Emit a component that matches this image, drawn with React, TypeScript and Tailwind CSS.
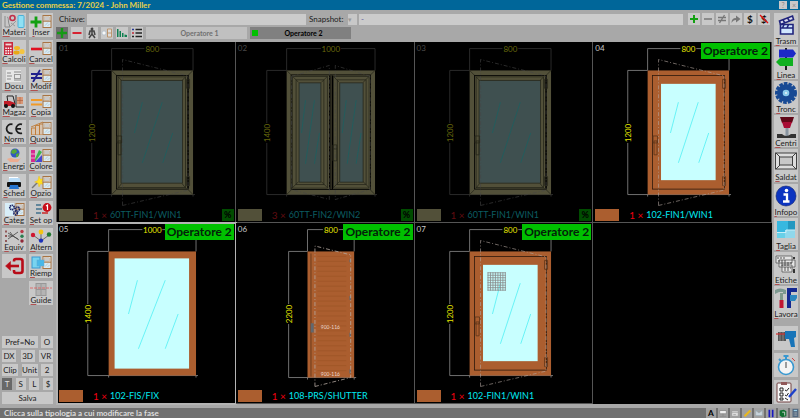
import React, { useState } from "react";

type Tool = { label: string; icon: React.ReactNode };

// Small window symbol shared by many toolbar icons
const Win = () => (
  <g>
    <rect x="14" y="2.5" width="8" height="12" fill="#dceaf0" stroke="#a87444" />
    <rect x="15.3" y="3.8" width="5.4" height="3.6" fill="#c9c9c9" stroke="#c8a27c" strokeWidth="0.4" />
    <path d="M14 8.200h8" stroke="#a87444" />
    <path d="M16 12.600l3-3.200M18.500 13l2-2" stroke="#8fb8cc" strokeWidth="0.6" />
  </g>
);

const leftTools: Tool[] = [
  {
    label: "Materi",
    icon: (
      <g fill="none">
        <path d="M3 3v11M5 4c2 0 1 5 2 7l1 3H3" stroke="#8a8a8a" />
        <circle cx="10.5" cy="5" r="2.5" stroke="#c0304a" strokeWidth="1.6" />
        <path d="M14 8l-6 6M9 10l4 3" stroke="#999" />
        <rect x="16" y="2.5" width="6" height="12" rx="1" fill="#8fe0f4" stroke="#4ab0d8" />
      </g>
    ),
  },
  { label: "Inser", icon: <><path d="M7 3.500v11M1.500 9h11" stroke="#12a012" strokeWidth="2.8" /><Win /></> },
  {
    label: "Calcoli",
    icon: (
      <g>
        <rect x="2" y="2" width="9" height="13" fill="#c8283c" />
        <path d="M3.500 4.500h6" stroke="#f2d8d8" strokeWidth="1.8" />
        <path d="M3.300 8.200h6.400M3.300 10.700h6.400M3.300 13.200h6.400" stroke="#fff" strokeWidth="1.4" strokeDasharray="1.5 0.9" />
        <ellipse cx="15" cy="8" rx="3" ry="2" fill="#f0b828" />
        <ellipse cx="14.5" cy="12.5" rx="3.2" ry="2" fill="#e8a818" />
        <ellipse cx="20" cy="11.5" rx="2.6" ry="2.6" fill="#f4c440" />
      </g>
    ),
  },
  { label: "Cancel", icon: <><path d="M2 9h11" stroke="#e01020" strokeWidth="2.6" /><Win /></> },
  {
    label: "Docu",
    icon: (
      <g>
        <path d="M4 3h15v12H4z" fill="#e6e6e6" />
        <path d="M5 6h4M5 9h5M5 12h4M12 5h7M12 13h7" stroke="#888" />
        <rect x="12.5" y="7.5" width="6" height="4" fill="none" stroke="#999" />
      </g>
    ),
  },
  { label: "Modif", icon: <><path d="M2 7h11M2 11h11M11 3L4 15" stroke="#20208c" strokeWidth="1.8" /><Win /></> },
  {
    label: "Magaz",
    icon: (
      <g>
        <path d="M5 3l1 7M5 3h6l2 8" fill="none" stroke="#222" />
        <path d="M2 8h6l5 2v3H2z" fill="#c01c28" />
        <path d="M14 2v12h8" fill="none" stroke="#333" />
        <rect x="15" y="4" width="6" height="7" fill="#d89878" />
        <path d="M15 7.500h6M18 4v7" stroke="#a85838" strokeWidth="0.6" />
        <circle cx="4" cy="13" r="2" fill="#111" />
        <circle cx="11" cy="13" r="2" fill="#111" />
      </g>
    ),
  },
  { label: "Copia", icon: <><path d="M2 7h11M2 11.500h11" stroke="#f09a28" strokeWidth="2" /><Win /></> },
  {
    label: "Norm",
    icon: <path d="M10.500 4.400A4.600 4.600 0 1 0 10.500 13.200M20 4.400A4.600 4.600 0 1 0 20 13.200M15 8.800h4" fill="none" stroke="#1c1c1c" strokeWidth="1.8" />,
  },
  {
    label: "Quota",
    icon: (
      <g fill="#d8c4b0" stroke="#c07c38" strokeWidth="0.9">
        <path d="M2.500 8h4v7h-4zM6.500 5.500h4V15h-4zM10.500 4h4v11h-4z" />
        <path d="M2 7l12-5" />
        <Win />
      </g>
    ),
  },
  {
    label: "Energi",
    icon: (
      <g>
        <circle cx="13" cy="6" r="4.5" fill="#3458c0" />
        <path d="M10 3l4-1 1 3-3 2-3-1zM14 7l3-1-1 4-2 0z" fill="#58a838" />
        <path d="M5 12q4-2 7 0h5l2-1-3 4H8z" fill="#ecac90" />
      </g>
    ),
  },
  {
    label: "Colore",
    icon: (
      <g>
        <path d="M2 3h4v12H2z" fill="#d82890" />
        <path d="M6 12l4-9 3 2-7 10z" fill="#3cb44c" />
        <path d="M6 15l7-7v7z" fill="#4848d0" />
        <path d="M2 7h4M2 11h4" stroke="#e8e8e8" strokeWidth="0.7" />
        <Win />
      </g>
    ),
  },
  {
    label: "Sched",
    icon: (
      <g>
        <path d="M7 3h9l2 5H7z" fill="#fff" />
        <path d="M7.500 4l-1 4h12l-1-4z" fill="#b8dcf8" />
        <rect x="5" y="8" width="14" height="5" rx="1" fill="#111" />
        <path d="M8 11h8l1 4H7z" fill="#2474d0" />
      </g>
    ),
  },
  {
    label: "Opzio",
    icon: (
      <g>
        <path d="M3 14l6-6" stroke="#777" strokeWidth="1.4" />
        <path d="M10 2l1.300 3.300 3.600-.6-2 2.800 2.200 3-3.600-.7L10 13l-.8-3.700L5.600 8l3.200-1.400z" fill="#ffe020" stroke="#e8b810" strokeWidth="0.4" />
        <Win />
      </g>
    ),
  },
  {
    label: "Categ",
    icon: (
      <g>
        <rect x="3" y="2" width="9" height="13" fill="#d8eef8" />
        <Win />
        <g fill="none" stroke="#1c2464" strokeWidth="1.7" strokeDasharray="1.3 0.5">
          <circle cx="10" cy="6.5" r="2.2" />
          <circle cx="15.5" cy="8" r="2" />
          <circle cx="13.5" cy="12" r="1.8" />
        </g>
      </g>
    ),
  },
  {
    label: "Set op",
    icon: (
      <g>
        <path d="M7 4h5M7 8h6M7 12h5" stroke="#40708c" strokeWidth="1.5" />
        <path d="M13 12h6" stroke="#c82828" strokeWidth="1.5" />
        <circle cx="18" cy="6.5" r="4.4" fill="#c80c18" />
        <path d="M17 5l1.500-1v5" fill="none" stroke="#fff" strokeWidth="1.2" />
      </g>
    ),
  },
  {
    label: "Equiv",
    icon: (
      <g>
        <path d="M6 5l10 6M6 11l10-7M6 8h5M11 8l6 4M8 4l3 4" stroke="#444" strokeWidth="0.8" fill="none" />
        <path d="M4 2.500v2M4 7v2M4 12v2" stroke="#905858" strokeWidth="2" />
        <circle cx="20" cy="3.5" r="1.7" fill="#b83848" />
        <circle cx="20" cy="8.3" r="1.7" fill="#2c7c50" />
        <circle cx="20" cy="13" r="1.7" fill="#902838" />
      </g>
    ),
  },
  {
    label: "Altern",
    icon: (
      <g>
        <path d="M4 7l8 6 8-6M12 4v9" fill="none" stroke="#444" strokeWidth="0.7" />
        <circle cx="4" cy="7" r="2.2" fill="#d01830" />
        <circle cx="12" cy="4" r="2.4" fill="#f4c414" />
        <circle cx="20" cy="6.5" r="2.2" fill="#207830" />
        <circle cx="12" cy="12.6" r="2.2" fill="#1c30b8" />
      </g>
    ),
  },
  {
    label: "",
    icon: (
      <g fill="none" stroke="#b80c18">
        <path d="M12 7.500V7q0-2 2-2h4q2.500 0 2.500 2v10q0 2-2.500 2h-4q-2 0-2-2v-1" strokeWidth="2.6" />
        <path d="M17 12H7" strokeWidth="2.6" />
        <path d="M8.500 7.500L3.500 12l5 4.500z" fill="#b80c18" strokeWidth="0.5" />
      </g>
    ),
  },
  {
    label: "Riemp",
    icon: (
      <g>
        <Win />
        <rect x="3" y="3" width="8" height="11" fill="#78d4f0" stroke="#3898d0" />
        <rect x="8" y="6" width="7" height="6" fill="#48b8e8" stroke="#60a8d0" strokeWidth="0.5" />
      </g>
    ),
  },
  {
    label: "Guide",
    icon: (
      <g fill="#b4b4b4" stroke="#989898">
        <rect x="7" y="2.5" width="10" height="12" />
        <path d="M12 2.500v12M7 8.500h10" />
        <path d="M1 7h22" stroke="#e05858" strokeWidth="0.8" strokeDasharray="3 1" />
      </g>
    ),
  },
];

const rightTools: Tool[] = [
  {
    label: "Trasm",
    icon: (
      <g stroke="#20247c" strokeWidth="1.6" fill="none">
        <path d="M5.500 8l13-5 1 3.500-13 5z" fill="#dde" />
        <path d="M9 7l2 3M13.500 5l2 3" />
        <path d="M6.500 11.500H19V21H6.500z" fill="#cfe6ff" />
        <path d="M6.500 15H19M10 11.500L8.500 15M14.500 11.500L13 15" />
      </g>
    ),
  },
  {
    label: "Linea",
    icon: (
      <g>
        <path d="M12 1v22" stroke="#222" strokeWidth="2" />
        <path d="M5 2.500h14l3 4-3 4H5z" fill="#1c28c8" />
        <path d="M19 11H6l-4 4 4 4h13z" fill="#10b020" />
      </g>
    ),
  },
  {
    label: "Tronc",
    icon: (
      <g>
        <circle cx="12" cy="12" r="9.5" fill="none" stroke="#184a94" strokeWidth="3" strokeDasharray="3.6 1.1" />
        <circle cx="12" cy="12" r="9" fill="#184a94" />
        <circle cx="12" cy="12" r="3.3" fill="#8cccec" />
        <circle cx="12" cy="12" r="1" fill="#e8f4fa" />
      </g>
    ),
  },
  {
    label: "Centri",
    icon: (
      <g>
        <path d="M6 2h14l-2 6H8z" fill="#600818" />
        <path d="M8 7h10l-2 6h-6z" fill="#a80c34" />
        <path d="M11.500 13h3v8l-1.500 1-1.500-1z" fill="#8894a0" />
        <path d="M3 19h5q4 4 9 0h5v4H3z" fill="#333" />
      </g>
    ),
  },
  {
    label: "Saldat",
    icon: (
      <g fill="#ddd" stroke="#404040">
        <rect x="1.5" y="4" width="21" height="16" />
        <rect x="5.500" y="8" width="13" height="8" fill="#c8c8c8" />
        <path d="M2 4l4 4M22 4l-4 4M2 20l4-4M22 20l-4-4" />
      </g>
    ),
  },
  {
    label: "Infopo",
    icon: (
      <g>
        <circle cx="12" cy="12" r="10" fill="#0c34c0" stroke="#0c2070" strokeWidth="0.6" />
        <circle cx="12.5" cy="6.5" r="1.8" fill="#fff" />
        <path d="M9.500 10.500h3.500V17M9 17.500h6.500" fill="none" stroke="#fff" strokeWidth="2.3" />
      </g>
    ),
  },
  {
    label: "Taglia",
    icon: (
      <g>
        <rect x="3" y="3" width="11" height="11" fill="#38b8e0" />
        <rect x="14" y="3" width="7" height="9" fill="#2498c0" />
        <rect x="3" y="14" width="8" height="6" fill="#68d0e8" />
        <rect x="11" y="12" width="10" height="8" fill="#90d8ec" />
        <path d="M3 14.500h9V12h9" stroke="#c8eef8" fill="none" />
      </g>
    ),
  },
  {
    label: "Etiche",
    icon: (
      <g fill="#e4e4e4" stroke="#555" strokeWidth="0.8">
        <path d="M2 4h16v7H2zM5 8h16v7H5zM8 13h10v7H8z" />
        <path d="M3 6h9M4 9h8M7 11h12M7 13h9M10 16h7M10 18h5" stroke="#333" strokeDasharray="2 1" />
        <path d="M20 5v2M20 17v4" stroke="#333" strokeWidth="2" />
      </g>
    ),
  },
  {
    label: "Lavora",
    icon: (
      <g>
        <path d="M1 4q5-3 11 0v4H9V6H5L1 8z" fill="#7c9890" />
        <path d="M6 7h3v8H6z" fill="#80988c" />
        <path d="M5.500 14h4v8h-4z" fill="#c01430" />
        <path d="M13 2h10v4h-6v16h-4z" fill="#142890" />
        <path d="M16 9h7v3l-2 3h-5z" fill="#2c88c0" />
      </g>
    ),
  },
];

const bottomTools: Tool[] = [
  {
    label: "Trapano",
    icon: (
      <g>
        <path d="M4 6h8v9H4z" fill="#555" />
        <path d="M6 6v9M9 6v9" stroke="#888" />
        <path d="M2 8h9" stroke="#d03030" strokeWidth="1.2" />
        <path d="M11 5h11v6l-2 1 1 9h-4l-2-8h-4z" fill="#1874b8" />
      </g>
    ),
  },
  {
    label: "Cronometro",
    icon: (
      <g>
        <path d="M9.500 3h5M12 3v3M5 6l2 2" stroke="#3898d0" strokeWidth="2" />
        <circle cx="12" cy="14" r="7.5" fill="#f4f4f4" stroke="#3898d0" strokeWidth="1.6" />
        <path d="M12 9v6" stroke="#444" />
        <path d="M18 5l3 3" stroke="#d04040" />
      </g>
    ),
  },
  {
    label: "Controlli",
    icon: (
      <g>
        <rect x="3" y="3" width="14" height="19" rx="1" fill="#f8f8f8" stroke="#704040" />
        <path d="M7 2h6v3H7z" fill="#905858" />
        <path d="M6 8h3v3H6zM6 13h3v3H6zM6 18h3v2H6z" fill="none" stroke="#222" />
        <path d="M11 10l1.500 1L15 8M11 15l1.500 1 2-3M11 18l3 2" stroke="#222" fill="none" />
        <path d="M22 9l-7 8" stroke="#1c40c8" strokeWidth="2.4" />
      </g>
    ),
  },
];

const keyRows = [
  [["Pref=No", "w-9"], ["O", "w-3"]],
  [["DX", "w-3.5"], ["3D", "w-3.5"], ["VR", "w-3.5"]],
  [["Clip", "w-4"], ["Unit", "w-4"], ["2", "w-3"]],
  [["T", "w-2.5"], ["S", "w-2.5"], ["L", "w-2.5"], ["$", "w-2.5"]],
  [["Salva", "w-full"]],
];

const editIcons: Tool[] = [
  { label: "Aggiungi", icon: <path d="M6 2v8M2 6h8" stroke="#12a012" strokeWidth="2" /> },
  { label: "Rimuovi", icon: <path d="M2 6h8" stroke="#777" strokeWidth="1.5" /> },
  { label: "Diverso", icon: <path d="M2 4.500h8M2 7.500h8M8.500 2l-5 8" stroke="#777" strokeWidth="1.3" /> },
  { label: "Inoltra", icon: <path d="M1.500 10q0-5 4.500-5V2.500L10.500 6 6 9.500V7q-3 0-4.500 3z" fill="#777" /> },
  { label: "Prezzi", icon: <text x="6" y="9.5" textAnchor="middle" fontSize="10" fontWeight="700" fill="#111">$</text> },
  {
    label: "Nascondi prezzi",
    icon: (
      <>
        <text x="6" y="9.5" textAnchor="middle" fontSize="10" fontWeight="700" fill="#111">$</text>
        <path d="M2 2l8 8" stroke="#e01010" strokeWidth="1.3" />
      </>
    ),
  },
];

const phaseIcons: Tool[] = [
  { label: "Aggiungi fase", icon: <path d="M6 1v10M1 6h10" stroke="#149a14" strokeWidth="2.4" /> },
  { label: "Elimina fase", icon: <path d="M1.500 6h9" stroke="#d81020" strokeWidth="1.8" /> },
  {
    label: "Operatore",
    icon: (
      <g stroke="#444" strokeWidth="1.5" fill="none">
        <path d="M6 3v4L3 11M6 7l3 4M3 8l1-4h4l1 4" />
        <circle cx="6" cy="2" r="0.7" />
      </g>
    ),
  },
  {
    label: "Nuova tipologia",
    icon: (
      <g>
        <circle cx="3" cy="6" r="2" fill="#f8f8f8" stroke="#a8b8c8" strokeWidth="0.6" />
        <path d="M6.500 2h4v8h-4zM6.500 6h4" fill="#ddd" stroke="#b88858" strokeWidth="0.8" />
      </g>
    ),
  },
  { label: "Grafico", icon: <path d="M1 2v8h1.500V2zM3.500 4v6H5V4zM6 6v4h1.500V6zM8.500 7.500V10H11V8z" fill="#108050" /> },
  {
    label: "Elenco",
    icon: (
      <g strokeWidth="1.7">
        <path d="M4.500 2.500H11M4.500 6H11M4.500 9.500H11" stroke="#222" />
        <path d="M1 2.500h2" stroke="#283898" />
        <path d="M1 6h2" stroke="#c02838" />
        <path d="M1 9.500h2" stroke="#222" />
      </g>
    ),
  },
];

const statusIcons: Tool[] = [
  { label: "Carattere", icon: <text x="6" y="9.5" textAnchor="middle" fontSize="10" fontWeight="700" fill="#000">A</text> },
  { label: "Rete", icon: <path d="M2 3h8v4H2zM6 7v3M2 10h8" fill="#eee" stroke="#888" /> },
  { label: "Finestra", icon: <path d="M2 3h8v7H2zM2 5h8M4 8h3" fill="#ddd" stroke="#999" /> },
  { label: "Modifica", icon: <path d="M3 10l7-7" stroke="#e8b820" strokeWidth="2.6" /> },
  { label: "Messaggi", icon: <path d="M2 3h8v6H2zM2 3l4 3 4-3" fill="#c8d4dc" stroke="#98a8b4" strokeWidth="0.7" /> },
  { label: "Pausa", icon: <path d="M4 2v9M8 2v9" stroke="#1818c0" strokeWidth="2" /> },
  {
    label: "Esci",
    icon: (
      <g>
        <path d="M2 3l5-1 3 2v6l-5 1-3-2z" fill="#107030" />
        <path d="M5 5h3v4" stroke="#ddd" fill="none" />
      </g>
    ),
  },
  {
    label: "Calcolatrice",
    icon: (
      <g>
        <path d="M3 1h7v10H3z" fill="#506880" />
        <path d="M4.500 3h4" stroke="#9cd0e8" strokeWidth="1.5" />
        <path d="M4.500 6h4M4.500 8.500h4" stroke="#ccc" strokeDasharray="1 .5" />
      </g>
    ),
  },
];

type Kind = "sash" | "double" | "fixed" | "shutter" | "net";
type Item = { id: string; kind: Kind; w: number; h: number; qty: number; code: string; active: boolean; selected?: boolean };

const items: Item[] = [
  { id: "01", kind: "sash", w: 800, h: 1200, qty: 1, code: "60TT-FIN1/WIN1", active: false },
  { id: "02", kind: "double", w: 1000, h: 1400, qty: 3, code: "60TT-FIN2/WIN2", active: false },
  { id: "03", kind: "sash", w: 800, h: 1200, qty: 1, code: "60TT-FIN1/WIN1", active: false },
  { id: "04", kind: "sash", w: 800, h: 1200, qty: 1, code: "102-FIN1/WIN1", active: true },
  { id: "05", kind: "fixed", w: 1000, h: 1400, qty: 1, code: "102-FIS/FIX", active: true, selected: true },
  { id: "06", kind: "shutter", w: 800, h: 2200, qty: 1, code: "108-PRS/SHUTTER", active: true },
  { id: "07", kind: "net", w: 800, h: 1200, qty: 1, code: "102-FIN1/WIN1", active: true },
];

const DIM = { frame: "#525039", edge: "#27271b", glass: "#3f5050", streak: "#1c6060", line: "#343434", text: "#68680c", dash: "#464646" };
const LIT = { frame: "#ab5e2f", edge: "#5c3418", glass: "#c8ffff", streak: "#50f0f4", line: "#8c8c8c", text: "#e8e800", dash: "#b4a8a0" };

// frame left/right edge and vertical dimension position
const spans = {
  sash: [55, 137, 35],
  net: [55, 137, 35],
  double: [51, 140, 31],
  fixed: [52, 140, 31],
  shutter: [72, 119, 53],
};

const Drawing = ({ item }: { item: Item }) => {
  const c = item.active ? LIT : DIM;
  const [l, r, v] = spans[item.kind];
  const top = 28;
  const bottom = item.kind === "shutter" ? 155 : 153;
  const mid = (l + r) / 2;
  const gap = item.w > 999 ? 10 : 8;

  return (
    <svg viewBox="0 0 179 180" className="col-start-1 row-start-1 h-full w-full">
      <g stroke={c.line} strokeWidth="0.8" fill="none">
        <path d={`M${l} ${top}V6H${mid - gap}M${mid + gap} 6H${r}V${top}`} />
        <path d={`M${l} ${top}H${v}V81M${v} 101V${bottom}H${r + 2}M${l} ${bottom}v2M${r} ${bottom}v2`} />
      </g>
      <text x={mid} y="9" fontSize="8" textAnchor="middle" fill={c.text}>{item.w}</text>
      <text transform={`translate(${v + 3} 91) rotate(-90)`} fontSize="8" textAnchor="middle" fill={c.text}>{item.h}</text>
      <rect x={l} y={top} width={r - l} height={bottom - top} fill={c.frame} />

      {item.kind === "fixed" && (
        <g>
          <rect x="58" y="35" width="75" height="111" fill={c.glass} />
          <path d="M81 57L72 91M109 57L82 126M122 91L109 126" stroke={c.streak} strokeWidth="0.8" />
        </g>
      )}

      {(item.kind === "sash" || item.kind === "net") && (
        <g fill="none" strokeWidth="0.8">
          <rect x="60" y="33" width="72.5" height="114.5" stroke={item.active ? "#2c180c" : "#000"} />
          {item.active ? (
            <rect x="68.5" y="41.5" width="55" height="97" fill={c.glass} />
          ) : (
            <g stroke={c.edge}>
              <rect x="61.5" y="34.5" width="68" height="111.5" />
              <path d="M55 28l5 5M137 28l-5 5M55 153l5-5M137 153l-5-5M61 34l4 4M130 34l-4 4M61 147l4-5M130 147l-4-5" />
              <rect x="64.5" y="38" width="62" height="103.5" fill={c.glass} />
              <path d="M131.500 34v113" stroke="#000" />
            </g>
          )}
          <path d="M86 60L78 91M106 60L86 121M116.500 91L106.500 121" stroke={c.streak} />
          {item.kind === "net" && (
            <g stroke="#888">
              <path d="M73 49.500h18.500M73 52h18.500M73 54.500h18.500M73 57h18.500M73 59.500h18.500M73 62h18.500M73 64.500h18.500M73 67h18.500" />
              <path d="M73.500 49v18.500M76 49v18.500M78.500 49v18.500M81 49v18.500M83.500 49v18.500M86 49v18.500M88.500 49v18.500M91 49v18.500" />
            </g>
          )}
          <path d="M60.500 94h4.500v7h-4.500zM61.500 99h3v14h-3zM130.500 37h3v9h-3zM130.500 135h3v9h-3z" stroke={c.edge} />
          <path d="M66 164V17l66 16.500M66 164l66-15.500V34" stroke={c.dash} strokeWidth="0.6" strokeDasharray="4 2 1 2" />
        </g>
      )}

      {item.kind === "double" && (
        <g fill="none" stroke={c.edge} strokeWidth="0.8">
          <rect x="55.5" y="32.5" width="80" height="115.5" stroke="#000" />
          <path d="M51 28l5 5M140 28l-5 5M51 153l5-5M140 153l-5-5" />
          <rect x="57" y="34" width="35" height="112.5" />
          <rect x="98" y="34" width="36" height="112.5" />
          <path d="M94.500 33v115M97 33v115" stroke="#000" strokeWidth="1.5" />
          <rect x="60.5" y="37.5" width="28" height="105.5" />
          <rect x="102" y="37.5" width="29" height="105.5" />
          <rect x="63.5" y="40.5" width="22" height="100" fill={c.glass} />
          <rect x="104.5" y="40.5" width="23.5" height="100" fill={c.glass} />
          <path d="M57 34l6 6M92 34l-6 6M57 146l6-6M92 146l-6-6M98 34l6 6M134 34l-6 6M98 146l6-6M134 146l-6-6" />
          <path d="M70 58l-4 33M79 58l-9 64M84 91l-5 31M111 58l-4 33M121 58l-9 64M126 91l-5 31" stroke={c.streak} />
          <path d="M97.500 103h4v16h-4zM97.500 107h4" />
          <path d="M56 34l38-11v135l-38-10zM135 34l-35-11v135l35-10z" stroke={c.dash} strokeWidth="0.6" strokeDasharray="4 2 1 2" />
        </g>
      )}

      {item.kind === "shutter" && (
        <g fill="none" strokeWidth="0.8">
          <path d="M75.500 30v124" stroke={c.edge} />
          {Array.from({ length: 24 }, (_, i) => (
            <path key={i} d={`M82 ${33 + i * 5}h29`} stroke="#985022" strokeWidth="0.5" />
          ))}
          <path d="M76 101h1.500v8H76zM115 36v3M115 73v4M115 110v4M115 147v4" stroke="#606870" strokeWidth="1.5" />
          <path d="M79.500 164V22.500l36 9M79.500 164l36-9V31" stroke={c.dash} strokeDasharray="4 2 1 2" />
          <text x="95" y="106" fontSize="5" textAnchor="middle" fill="#ecd8cc">900-116</text>
          <text x="95" y="153" fontSize="5" textAnchor="middle" fill="#ecd8cc">900-116</text>
        </g>
      )}
    </svg>
  );
};

const Cell = ({ item }: { item: Item }) => (
  <div
    className={`grid border-r border-b border-[#555] bg-black ${item.selected ? "outline-2 -outline-offset-1 outline-[#b4b4b4]" : ""}`}
  >
    <Drawing item={item} />
    <div className="col-start-1 row-start-1 flex items-start justify-between self-start pt-px pr-px">
      <span className={`px-0.5 pt-px text-[8px] leading-[8px] ${item.active ? "text-[#c8c8c8]" : "text-[#484848]"}`}>
        {item.id}
      </span>
      {item.active && (
        <span className="bg-[#00c000] px-0.5 text-[12px] leading-4 font-bold text-[#04200a]">Operatore 2</span>
      )}
    </div>
    <div className="col-start-1 row-start-1 flex items-center self-end pb-px pl-0.5 text-[9px] leading-3">
      <span className={`mr-2.5 h-3 w-6 ${item.active ? "bg-[#ab5e2f]" : "bg-[#525039]"}`} />
      <span className={`w-[17px] text-[10px] ${item.active ? "text-[#f00010]" : "text-[#600c10]"}`}>{item.qty} ×</span>
      <span className={item.active ? "text-[#00e8f0]" : "text-[#0c5c60]"}>{item.code}</span>
      {!item.active && (
        <span className="mr-px ml-auto h-3 w-3 bg-[#004c00] text-center font-bold text-black">%</span>
      )}
    </div>
  </div>
);

const Label = ({ text }: { text: string }) => (
  <span className="block text-[8px] leading-[8px] whitespace-nowrap">
    <span className="underline decoration-[#b05050] decoration-1">{text[0]}</span>
    {text.slice(1)}
  </span>
);

const MiniButton = ({ tool, className }: { tool: Tool; className: string }) => (
  <button aria-label={tool.label} className={`shrink-0 ${className}`}>
    <svg viewBox="0 0 12 12" className="h-full w-full" fill="none">{tool.icon}</svg>
  </button>
);

const App = () => {
  const [phase, setPhase] = useState("Operatore 2");

  return (
    <div className="flex min-h-screen flex-col bg-[#a8a8a8] font-[family-name:Lato,sans-serif] text-[#1c1c1c]">
      <header className="flex h-2.5 items-center justify-between bg-[#006699] px-0.5">
        <h1 className="text-[8px] leading-[10px] font-bold text-[#e8d048]">Gestione commessa: 7/2024 - John Miller</h1>
        <div className="flex gap-[3px] text-[7px] leading-[8px] text-[#888]">
          <button aria-label="Aiuto" className="h-2 w-2 bg-[#c8c8c8]">?</button>
          <button aria-label="Chiudi" className="h-2 w-2 bg-[#c8c8c8]">×</button>
        </div>
      </header>

      <div className="flex flex-1">
        <aside className="flex w-14 shrink-0 flex-col pt-[3px] pr-[3px] pl-0.5">
          <div className="mb-[31px] grid flex-1 auto-rows-fr grid-cols-2 gap-[3px]">
            {leftTools.map((t, i) => (
              <button
                key={i}
                aria-label={t.label || "Uscita"}
                className={`flex h-full w-6 flex-col items-center bg-[#c8c8c8] ${t.label === "Guide" ? "col-start-2" : ""}`}
              >
                <svg viewBox={t.label ? "0 0 24 15" : "0 0 24 23"} className={t.label ? "h-[15px] w-6" : "h-[23px] w-6"}>
                  {t.icon}
                </svg>
                {t.label && <Label text={t.label} />}
              </button>
            ))}
          </div>
          <div className="flex flex-col gap-0.5 text-[8px] leading-3">
            {keyRows.map((row, i) => (
              <div key={i} className="flex justify-between">
                {row.map(([k, w]) => (
                  <button
                    key={k}
                    className={`flex h-3 justify-center whitespace-nowrap ${w} ${k === "T" ? "bg-[#686868] text-[#ddd]" : "bg-[#c8c8c8]"}`}
                  >
                    {k}
                  </button>
                ))}
              </div>
            ))}
          </div>
        </aside>

        <main className="flex min-w-0 flex-1 flex-col pt-[3px]">
          <div className="flex h-3 items-center pr-0.5 pl-[3px] text-[8px]">
            <label htmlFor="chiave" className="w-7">Chiave:</label>
            <input id="chiave" className="h-[11px] w-[219px] bg-[#cbcbcb]" />
            <label htmlFor="snapshot" className="mx-[3px] w-9">Snapshot:</label>
            <select id="snapshot" className="mr-0.5 h-[11px] w-[9px] appearance-none bg-[#c8c8c8] text-[7px] text-[#999]">
              <option>▾</option>
            </select>
            <input aria-label="Nome snapshot" defaultValue="-" className="mr-[5px] h-[11px] min-w-0 flex-1 bg-[#cbcbcb] pl-0.5 text-[#5858a0]" />
            <div className="flex gap-0.5">
              {editIcons.map((t) => <MiniButton key={t.label} tool={t} className="h-3 w-3 bg-[#c8c8c8]" />)}
            </div>
          </div>
          <div className="mt-0.5 mb-[3px] flex h-3 gap-[3px]">
            {phaseIcons.map((t, i) => (
              <MiniButton key={t.label} tool={t} className={i === 0 ? "h-3 w-3 bg-[#707070]" : "h-3 w-3 bg-[#c8c8c8]"} />
            ))}
            {["Operatore 1", "Operatore 2"].map((name) => (
              <button
                key={name}
                onClick={() => setPhase(name)}
                className={`flex w-[101px] items-center text-[7px] font-bold ${
                  phase === name ? "bg-[#808080] text-black" : "bg-[#c0c0c0] text-[#707070]"
                }`}
              >
                <span className={`ml-0.5 h-1.5 w-1.5 ${phase === name ? "bg-[#00c000]" : ""}`} />
                <span className="flex-1 pr-0.5">{name}</span>
              </button>
            ))}
          </div>
          <div className="grid flex-1 auto-rows-fr grid-cols-4 border-l border-[#555] bg-black">
            {items.map((item) => <Cell key={item.id} item={item} />)}
          </div>
        </main>

        <aside className="flex w-7 shrink-0 flex-col pt-[3px] pl-0.5">
          <div className="flex flex-1 flex-col gap-0.5">
            {rightTools.map((t) => (
              <button key={t.label} className="flex w-6 flex-1 flex-col items-center bg-[#c8c8c8]">
                <svg viewBox="0 0 24 24" className="h-6 w-6">{t.icon}</svg>
                <Label text={t.label} />
              </button>
            ))}
          </div>
          <div className="mt-2 flex flex-col gap-[3px]">
            {bottomTools.map((t) => (
              <button key={t.label} aria-label={t.label} className="h-6 w-6 bg-[#c8c8c8]">
                <svg viewBox="0 0 24 24" className="h-6 w-6">{t.icon}</svg>
              </button>
            ))}
          </div>
        </aside>
      </div>

      <footer className="mt-1 flex h-2.5 items-center justify-between bg-[#707070] pl-1">
        <p className="text-[8px] leading-[10px] font-bold text-[#dcdcdc]">Clicca sulla tipologia a cui modificare la fase</p>
        <div className="flex gap-0.5">
          {statusIcons.map((t) => <MiniButton key={t.label} tool={t} className="h-2.5 w-2.5 bg-[#a0a0a0]" />)}
        </div>
      </footer>
    </div>
  );
};

export default App;
